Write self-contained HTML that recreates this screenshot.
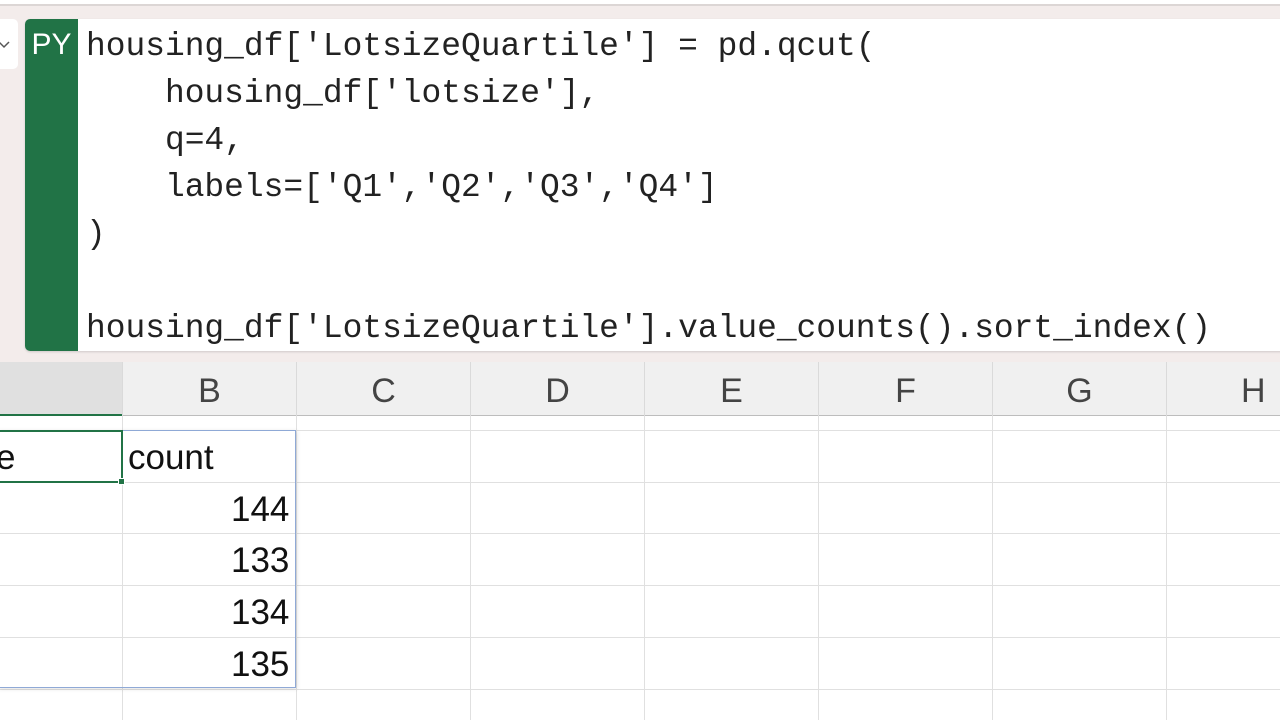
<!DOCTYPE html>
<html><head><style>
*{margin:0;padding:0;box-sizing:border-box}
body{width:1280px;height:720px;overflow:hidden;background:#fff;position:relative;font-family:"Liberation Sans",sans-serif}
.abs{position:absolute}
#top{left:0;top:0;width:1280px;height:362px;background:#f3eceb}
#topline{left:0;top:0;width:1280px;height:6px;background:#fff;border-bottom:2px solid #dcd6d5}
#dd{left:-10px;top:19px;width:28px;height:50px;background:#fff;border-radius:5px}
#code{left:25px;top:19px;width:1260px;height:332px;background:#fff;border-radius:5px 0 0 5px;box-shadow:0 1px 2px rgba(0,0,0,.15)}
#py{left:25px;top:19px;width:53px;height:332px;background:#217346;border-radius:5px 0 0 5px;color:#fff;font-size:30px;text-align:center;padding-top:9px}
pre{position:absolute;left:86px;top:23px;font-family:"Liberation Mono",monospace;font-size:32.9px;line-height:47px;color:#222}
#hdr{left:0;top:362px;width:1280px;height:54px;background:#f0f0f0;border-bottom:1px solid #bdbdbd}
#hA{left:0;top:362px;width:122px;height:54px;background:#e0e0e0;border-bottom:2px solid #217346}
.hl{position:absolute;top:362px;height:54px;width:174px;border-left:1px solid #dadada;text-align:center;font-size:34px;color:#444;line-height:58px}
.vl{position:absolute;top:416px;height:304px;width:1px;background:#e0e0e0}
.hr{position:absolute;left:0;width:1280px;height:1px;background:#e0e0e0}
.c{position:absolute;font-size:35px;color:#111}
</style></head><body>
<div class="abs" id="top"></div>
<div class="abs" id="topline"></div>
<div class="abs" id="dd"><svg width="28" height="50" style="position:absolute;left:0;top:0"><path d="M9 23 L14 28 L19 23" stroke="#555" stroke-width="1.5" fill="none"/></svg></div>
<div class="abs" id="code"></div>
<div class="abs" id="py">PY</div>
<pre>housing_df['LotsizeQuartile'] = pd.qcut(
    housing_df['lotsize'],
    q=4,
    labels=['Q1','Q2','Q3','Q4']
)

housing_df['LotsizeQuartile'].value_counts().sort_index()</pre>
<div class="abs" id="hdr"></div>
<div class="abs" id="hA"></div>
<div class="hl" style="left:122px">B</div>
<div class="hl" style="left:296px">C</div>
<div class="hl" style="left:470px">D</div>
<div class="hl" style="left:644px">E</div>
<div class="hl" style="left:818px">F</div>
<div class="hl" style="left:992px">G</div>
<div class="hl" style="left:1166px;width:120px;text-align:left;padding-left:74px">H</div>
<div class="vl" style="left:122px"></div><div class="vl" style="left:296px"></div><div class="vl" style="left:470px"></div><div class="vl" style="left:644px"></div><div class="vl" style="left:818px"></div><div class="vl" style="left:992px"></div><div class="vl" style="left:1166px"></div>
<div class="hr" style="top:430px"></div><div class="hr" style="top:482px"></div><div class="hr" style="top:533px"></div><div class="hr" style="top:585px"></div><div class="hr" style="top:637px"></div><div class="hr" style="top:689px"></div>
<div class="abs" style="left:-2px;top:430px;width:298px;height:258px;border:1px solid #8fa9d6;box-shadow:1px 1px 4px rgba(0,0,0,.12)"></div>
<div class="abs" style="left:-2px;top:430px;width:125px;height:53px;border:2px solid #217346"></div>
<div class="abs" style="left:118px;top:478px;width:7px;height:7px;background:#217346;border:1px solid #fff"></div>
<div class="c" style="left:-4px;top:438px">e</div>
<div class="c" style="left:128px;top:438px">count</div>
<div class="c" style="left:231px;top:490px">144</div>
<div class="c" style="left:231px;top:541px">133</div>
<div class="c" style="left:231px;top:593px">134</div>
<div class="c" style="left:231px;top:645px">135</div>
</body></html>
